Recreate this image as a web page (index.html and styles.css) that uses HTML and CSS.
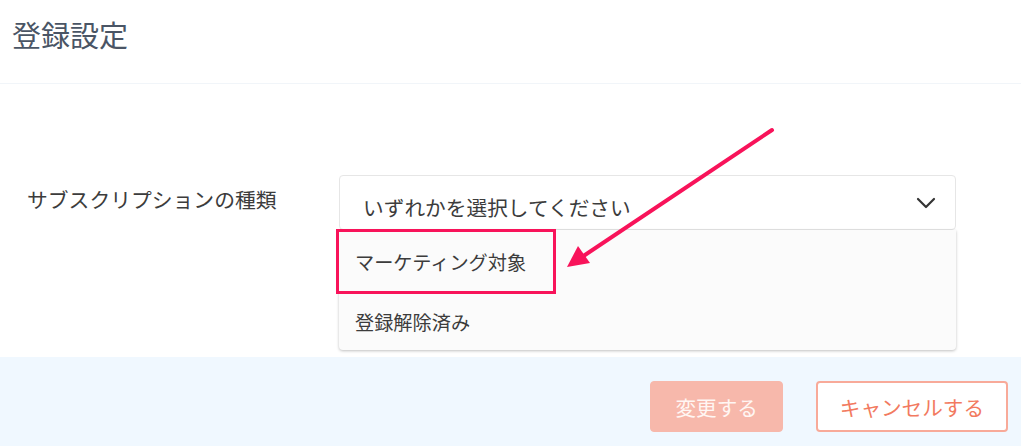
FILE: index.html
```html
<!DOCTYPE html>
<html lang="ja">
<head>
    <meta charset="UTF-8">
    <meta name="viewport" content="width=device-width, initial-scale=1.0">
    <title>登録設定</title>
    <link rel="stylesheet" href="styles.css">
</head>
<body>
    <header class="page-header">
        <h1 class="page-title">登録設定</h1>
    </header>
    <section class="form-body">
        <div class="field-row">
            <label class="field-label">サブスクリプションの種類</label>
            <div class="select-wrap">
                <div class="select-box">
                    <span class="select-text">いずれかを選択してください</span>
                    <svg class="chevron" width="20" height="12" viewBox="0 0 20 12">
                        <polyline points="2,2 10,10 18,2" fill="none" stroke="#333" stroke-width="2.2" stroke-linecap="round" stroke-linejoin="round"/>
                    </svg>
                </div>
                <ul class="dropdown">
                    <li class="option">マーケティング対象</li>
                    <li class="option">登録解除済み</li>
                </ul>
                <!-- callout box around the first option -->
                <div class="callout-box"></div>
            </div>
        </div>
        <svg class="callout-arrow" width="1021" height="447" viewBox="0 0 1021 447">
            <line x1="772" y1="130" x2="582" y2="257" stroke="#f8135a" stroke-width="4" stroke-linecap="round"/>
            <polygon points="567,267 590,263 578,246" fill="#f8135a"/>
        </svg>
    </section>
    <footer class="actions">
        <button class="btn btn-primary">変更する</button>
        <button class="btn btn-outline">キャンセルする</button>
    </footer>
</body>
</html>
```

FILE: styles.css
```css
body {
    font-family: "Noto Sans CJK JP", "Noto Sans", sans-serif;
    margin: 0;
    padding: 0;
    background-color: #ffffff;
    color: #3e3e3e;
    width: 1021px;
    height: 447px;
    overflow: hidden;
    position: relative;
}
.page-header {
    height: 84px;
    box-sizing: border-box;
    padding: 14px 12px 0;
    border-bottom: 1px solid #f1f5f9;
}
.page-title {
    margin: 0;
    font-size: 29px;
    line-height: 40px;
    font-weight: 400;
    color: #4a5565;
}
.form-body {
    height: 273px;
    box-sizing: border-box;
    padding-top: 91px;
}
.field-row {
    display: grid;
    grid-template-columns: 312px 617px;
    padding-left: 27px;
}
.field-label {
    font-size: 20.8px;
    line-height: 30px;
    padding-top: 9px;
    color: #3c3c3c;
}
.select-wrap {
    position: relative;
}
.select-box {
    height: 55px;
    box-sizing: border-box;
    border: 1px solid #e6e6e6;
    border-radius: 4px;
    display: flex;
    align-items: center;
    justify-content: space-between;
    padding: 8px 19px 0 23px;
}
.select-text {
    font-size: 20.7px;
    line-height: 30px;
    color: #3c3c3c;
}
.chevron {
    margin-top: -8px;
}
.dropdown {
    position: absolute;
    top: 55px;
    left: 0;
    right: 0;
    margin: 0;
    padding: 0;
    list-style: none;
    background-color: #fbfbfb;
    border-radius: 0 0 4px 4px;
    box-shadow: 0 1px 3px #00000040;
    z-index: 2;
}
.option {
    height: 60px;
    box-sizing: border-box;
    padding: 18px 0 0 16px;
    font-size: 19.2px;
    line-height: 28px;
    color: #3c3c3c;
}
.callout-box {
    position: absolute;
    top: 54px;
    left: -3px;
    width: 220px;
    height: 65px;
    box-sizing: border-box;
    border: 3px solid #f8135a;
    z-index: 3;
}
.callout-arrow {
    position: absolute;
    top: 0;
    left: 0;
    z-index: 4;
    pointer-events: none;
}
.actions {
    height: 89px;
    box-sizing: border-box;
    background-color: #f0f8ff;
    display: flex;
    justify-content: flex-end;
    align-items: flex-start;
    gap: 33px;
    padding: 24px 13px 0 0;
}
.btn {
    height: 51px;
    padding: 0 24px;
    border-radius: 4px;
    font-family: inherit;
    font-size: 20.6px;
    cursor: pointer;
}
.btn-primary {
    background-color: #f7b8ab;
    border: 1px solid #f7b8ab;
    color: #fff6f3;
}
.btn-outline {
    background-color: #ffffff;
    border: 2px solid #f8aa99;
    color: #f27a60;
    padding: 0 22px;
}
```
